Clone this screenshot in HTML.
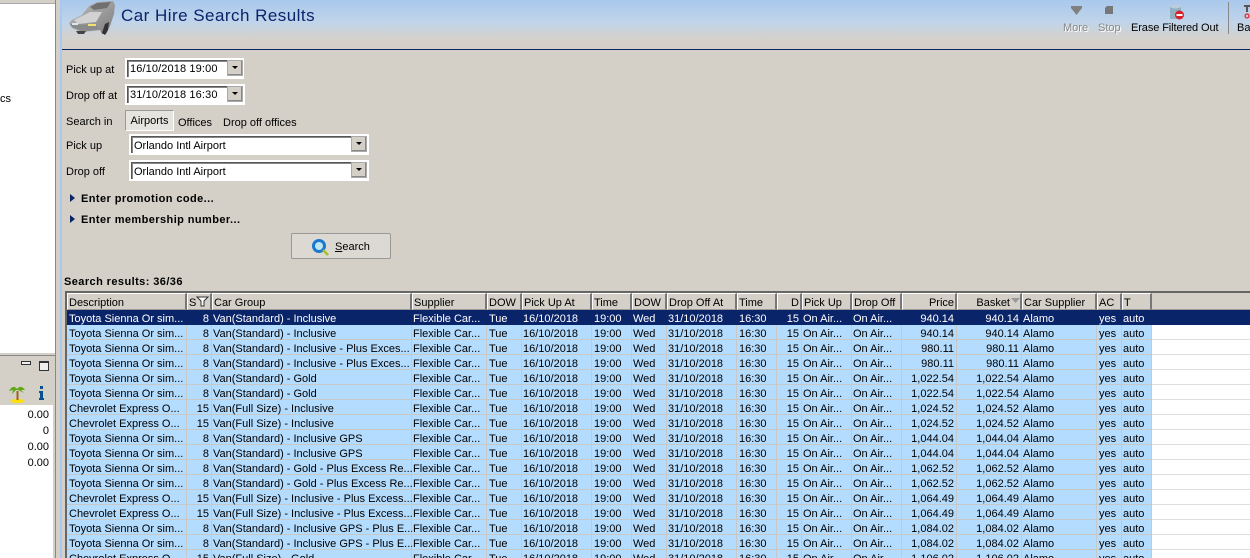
<!DOCTYPE html>
<html><head><meta charset="utf-8"><style>
html,body{margin:0;padding:0;width:1250px;height:558px;overflow:hidden;background:#d4d0c8;font-family:"Liberation Sans",sans-serif;font-size:11px;color:#000}
#w{position:absolute;left:0;top:0;width:1250px;height:558px;overflow:hidden}
.a{position:absolute;white-space:nowrap}
.box{position:absolute;background:#fff;border:1px solid #fff;box-shadow:inset 1px 1px 0 #555,inset 2px 2px 0 #888;box-sizing:border-box;outline:1px solid #fff;line-height:20px;padding-left:3px}
.dd{position:absolute;width:16px;height:16px;background:#d4d0c8;border:1px solid #aaa;box-shadow:inset -1px -1px 0 #888;box-sizing:border-box}
.dd:after{content:"";position:absolute;left:4px;top:5px;border:3px solid transparent;border-top:3px solid #000;border-bottom:0}
.tri{position:absolute;border:4px solid transparent;border-left:5px solid #0a246a;border-right:0}
table{position:absolute;left:67px;top:293px;border-collapse:separate;border-spacing:0;table-layout:fixed;width:1085px;font-size:11px}
td{height:15px;box-sizing:border-box;padding:3px 0 0 1px;box-shadow:inset -1px -1px 0 #c8c8c8;background:#b4dcff;white-space:nowrap;overflow:hidden;line-height:12px}
td:nth-child(1),td:nth-child(5),td:nth-child(7),td:nth-child(10),td:nth-child(17){padding-left:2px}
tr.h td{height:17px;background:#d4d0c8;border-top:1px solid #fff;border-left:1px solid #fff;border-right:2px solid #777;border-bottom:1px solid #999;padding:3px 0 0 1px;box-shadow:none}
tr.s td{background:#0a246a;color:#fff;box-shadow:none}
td.r{text-align:right;padding-right:3px;padding-left:0}
tr.h td.r{padding-right:1px;padding-left:0}
.b{font-weight:bold;letter-spacing:.42px}
</style></head><body><div id="w">
<!-- left panel -->
<div class="a" style="left:0;top:0;width:55px;height:353px;background:#fff;border-right:1px solid #888"></div>
<div class="a" style="left:0;top:0;width:55px;height:3px;background:#d4d0c8;border-bottom:1px solid #aaa"></div>
<div class="a" style="left:0;top:92px;line-height:14px">cs</div>
<div class="a" style="left:0;top:353px;width:55px;height:205px;background:#d4d0c8;border-right:1px solid #888"></div>
<div class="a" style="left:0;top:355px;width:55px;height:1px;background:#888"></div>
<div class="a" style="left:21px;top:361px;width:8px;height:2px;border:1px solid #333;background:#eee"></div>
<div class="a" style="left:39px;top:361px;width:8px;height:7px;border:1px solid #333;border-top-width:2px;background:#eee"></div>
<div class="a" style="left:0;top:405px;width:53px;height:153px;background:#fff"></div>
<svg class="a" style="left:8px;top:384px" width="20" height="20"><ellipse cx="9.500" cy="17" rx="7" ry="2" fill="#ffe000"/><rect x="8.500" y="7" width="2" height="9" fill="#a06020"/><path d="M1 7Q5 0 9 5Q13 0 17 6L13 6L16 9L10 6L8 6L4 10L5 6Z" fill="#60a818"/></svg>
<svg class="a" style="left:38px;top:386px" width="7" height="15"><rect x="2" y="0" width="3" height="3" fill="#0a5090"/><path d="M1 5H5V12H6V14H1V12H2V7H1Z" fill="#0a5090"/></svg>
<div class="a" style="left:0;width:49px;text-align:right;top:408px;line-height:14px">0.00</div>
<div class="a" style="left:0;width:49px;text-align:right;top:424px;line-height:14px">0</div>
<div class="a" style="left:0;width:49px;text-align:right;top:440px;line-height:14px">0.00</div>
<div class="a" style="left:0;width:49px;text-align:right;top:456px;line-height:14px">0.00</div>
<!-- splitter -->
<div class="a" style="left:56px;top:0;width:4px;height:558px;background:#d4d0c8"></div>
<div class="a" style="left:60px;top:0;width:2px;height:558px;background:#a8c8f0"></div>
<!-- header -->
<div class="a" style="left:62px;top:0;width:1188px;height:50px;background:linear-gradient(#a9c8ec 0,#c0d4ea 22px,#d4d2cc 38px,#d4d0c8 49px);border-bottom:1px solid #0a246a;box-sizing:border-box"></div>
<svg class="a" style="left:66px;top:0" width="52" height="36" viewBox="0 0 52 36">
<defs><linearGradient id="g" x1="0" y1="0" x2="1" y2="1"><stop offset="0" stop-color="#bdbdbd"/><stop offset="1" stop-color="#7d7d7d"/></linearGradient></defs>
<path d="M3 23L6 20L16 15L23 6L31 2L47 1L49 5L48 14L44 26L40 34L36 34L34 30L16 32L6 28Z" fill="url(#g)"/>
<path d="M24 7L31 3L45 2L41 8L28 10Z" fill="#707070"/>
<path d="M8 20L24 12L36 12L30 22L12 24Z" fill="#d2d2d2"/>
<path d="M4 24L31 25L33 29L16 31L6 27Z" fill="#8a8a8a"/>
<rect x="22" y="24" width="8" height="2" fill="#f2e070"/>
<rect x="6" y="23" width="6" height="2" fill="#d8e8f0"/>
<path d="M36 33L39 24L43 22L42 30L39 35Z" fill="#333"/>
<path d="M10 31L20 31L18 34L12 34Z" fill="#444"/>
</svg>
<div class="a" style="left:121px;top:6px;font-size:17px;line-height:20px;color:#0a246a;letter-spacing:.47px">Car Hire Search Results</div>
<svg class="a" style="left:1070px;top:5px" width="13" height="11"><path d="M1 1H12V3L6.500 10L1 3Z" fill="#808080"/></svg>
<svg class="a" style="left:1105px;top:6px" width="8" height="8"><path d="M2 0H8V8H0V2Z" fill="#777"/></svg>
<svg class="a" style="left:1169px;top:4px" width="16" height="17"><path d="M1 2H12V15H1Z" fill="#8fb0c0"/><ellipse cx="6.500" cy="2.500" rx="5.500" ry="2" fill="#bcd"/><circle cx="10.500" cy="11" r="4.500" fill="#d8202c"/><rect x="7.500" y="10" width="6" height="2" fill="#fff"/></svg>
<div class="a" style="left:1063px;top:21px;line-height:14px;color:#888;text-shadow:1px 1px 0 #fff">More</div>
<div class="a" style="left:1098px;top:21px;line-height:14px;color:#888;text-shadow:1px 1px 0 #fff">Stop</div>
<div class="a" style="left:1131px;top:21px;line-height:14px;letter-spacing:-.1px">Erase Filtered Out</div>
<div class="a" style="left:1228px;top:2px;width:1px;height:32px;background:#888"></div>
<div class="a" style="left:1237px;top:21px;line-height:14px">Ba</div>
<svg class="a" style="left:1244px;top:5px" width="6" height="14"><path d="M0 0H6V2H4V7H2V2H0Z" fill="#555"/><circle cx="3" cy="11" r="2" fill="none" stroke="#e00"/></svg>
<!-- form -->
<div class="a" style="left:66px;top:63px;line-height:14px">Pick up at</div>
<div class="box" style="left:126px;top:59px;width:117px;height:19px;line-height:17px;padding-top:1px;letter-spacing:.12px">16/10/2018 19:00</div><div class="dd" style="left:227px;top:60px"></div>
<div class="a" style="left:66px;top:89px;line-height:14px">Drop off at</div>
<div class="box" style="left:126px;top:85px;width:118px;height:19px;line-height:17px;padding-top:1px;letter-spacing:.12px">31/10/2018 16:30</div><div class="dd" style="left:227px;top:86px"></div>
<div class="a" style="left:66px;top:115px;line-height:14px">Search in</div>
<div class="a" style="left:125px;top:110px;width:49px;height:21px;background:#e6e4de;border:1px solid #999;border-right-color:#fff;border-bottom-color:#fff;box-sizing:border-box;text-align:center;line-height:21px">Airports</div>
<div class="a" style="left:178px;top:116px;line-height:14px">Offices</div>
<div class="a" style="left:223px;top:116px;line-height:14px">Drop off offices</div>
<div class="a" style="left:66px;top:139px;line-height:14px">Pick up</div>
<div class="box" style="left:130px;top:135px;width:238px;height:19px;line-height:20px">Orlando Intl Airport</div><div class="dd" style="left:351px;top:136px"></div>
<div class="a" style="left:66px;top:165px;line-height:14px">Drop off</div>
<div class="box" style="left:130px;top:161px;width:238px;height:19px;line-height:20px">Orlando Intl Airport</div><div class="dd" style="left:351px;top:162px"></div>
<div class="tri" style="left:70px;top:194px"></div>
<div class="a b" style="left:81px;top:192px;line-height:14px">Enter promotion code...</div>
<div class="tri" style="left:70px;top:215px"></div>
<div class="a b" style="left:81px;top:213px;line-height:14px">Enter membership number...</div>
<div class="a" style="left:291px;top:233px;width:100px;height:26px;background:#dcd8d2;border:1px solid #999;border-radius:2px;box-sizing:border-box"></div>
<svg class="a" style="left:311px;top:238px" width="18" height="18"><circle cx="8" cy="8" r="7" fill="#1a78d0"/><circle cx="8" cy="8" r="4" fill="#bfe6f0"/><path d="M12 12L17 17" stroke="#a8c020" stroke-width="2.500"/></svg>
<div class="a" style="left:335px;top:240px;line-height:14px"><u>S</u>earch</div>
<div class="a b" style="left:64px;top:275px;line-height:14px">Search results: 36/36</div>
<!-- grid -->
<div class="a" style="left:65px;top:291px;width:1185px;height:267px;background:#fff;border-top:2px solid #666;border-left:2px solid #666;box-sizing:border-box"></div>
<div class="a" style="left:1152px;top:293px;width:98px;height:17px;background:#d4d0c8;border-bottom:1px solid #999;box-sizing:border-box"></div>
<div class="a" style="left:1152px;top:325px;width:98px;height:233px;background:repeating-linear-gradient(#fff 0,#fff 14px,#ddd 14px,#ddd 15px)"></div>
<div class="a" style="left:1152px;top:310px;width:98px;height:15px;background:#0a246a"></div>
<table><colgroup><col style="width:120px"><col style="width:25px"><col style="width:200px"><col style="width:75px"><col style="width:35px"><col style="width:70px"><col style="width:40px"><col style="width:35px"><col style="width:70px"><col style="width:40px"><col style="width:25px"><col style="width:50px"><col style="width:50px"><col style="width:55px"><col style="width:65px"><col style="width:75px"><col style="width:25px"><col style="width:30px"></colgroup>
<tr class="h"><td>Description</td><td>S</td><td>Car Group</td><td>Supplier</td><td>DOW</td><td>Pick Up At</td><td>Time</td><td>DOW</td><td>Drop Off At</td><td>Time</td><td class="r">D</td><td>Pick Up</td><td>Drop Off</td><td class="r">Price</td><td class="r" style="padding-right:10px">Basket</td><td>Car Supplier</td><td>AC</td><td>T</td></tr>
<tr class="s"><td>Toyota Sienna Or sim...</td><td class="r">8</td><td>Van(Standard) - Inclusive</td><td>Flexible Car...</td><td>Tue</td><td>16/10/2018</td><td>19:00</td><td>Wed</td><td>31/10/2018</td><td>16:30</td><td class="r">15</td><td>On Air...</td><td>On Air...</td><td class="r">940.14</td><td class="r">940.14</td><td>Alamo</td><td>yes</td><td>auto</td></tr>
<tr><td>Toyota Sienna Or sim...</td><td class="r">8</td><td>Van(Standard) - Inclusive</td><td>Flexible Car...</td><td>Tue</td><td>16/10/2018</td><td>19:00</td><td>Wed</td><td>31/10/2018</td><td>16:30</td><td class="r">15</td><td>On Air...</td><td>On Air...</td><td class="r">940.14</td><td class="r">940.14</td><td>Alamo</td><td>yes</td><td>auto</td></tr>
<tr><td>Toyota Sienna Or sim...</td><td class="r">8</td><td>Van(Standard) - Inclusive - Plus Exces...</td><td>Flexible Car...</td><td>Tue</td><td>16/10/2018</td><td>19:00</td><td>Wed</td><td>31/10/2018</td><td>16:30</td><td class="r">15</td><td>On Air...</td><td>On Air...</td><td class="r">980.11</td><td class="r">980.11</td><td>Alamo</td><td>yes</td><td>auto</td></tr>
<tr><td>Toyota Sienna Or sim...</td><td class="r">8</td><td>Van(Standard) - Inclusive - Plus Exces...</td><td>Flexible Car...</td><td>Tue</td><td>16/10/2018</td><td>19:00</td><td>Wed</td><td>31/10/2018</td><td>16:30</td><td class="r">15</td><td>On Air...</td><td>On Air...</td><td class="r">980.11</td><td class="r">980.11</td><td>Alamo</td><td>yes</td><td>auto</td></tr>
<tr><td>Toyota Sienna Or sim...</td><td class="r">8</td><td>Van(Standard) - Gold</td><td>Flexible Car...</td><td>Tue</td><td>16/10/2018</td><td>19:00</td><td>Wed</td><td>31/10/2018</td><td>16:30</td><td class="r">15</td><td>On Air...</td><td>On Air...</td><td class="r">1,022.54</td><td class="r">1,022.54</td><td>Alamo</td><td>yes</td><td>auto</td></tr>
<tr><td>Toyota Sienna Or sim...</td><td class="r">8</td><td>Van(Standard) - Gold</td><td>Flexible Car...</td><td>Tue</td><td>16/10/2018</td><td>19:00</td><td>Wed</td><td>31/10/2018</td><td>16:30</td><td class="r">15</td><td>On Air...</td><td>On Air...</td><td class="r">1,022.54</td><td class="r">1,022.54</td><td>Alamo</td><td>yes</td><td>auto</td></tr>
<tr><td>Chevrolet Express O...</td><td class="r">15</td><td>Van(Full Size) - Inclusive</td><td>Flexible Car...</td><td>Tue</td><td>16/10/2018</td><td>19:00</td><td>Wed</td><td>31/10/2018</td><td>16:30</td><td class="r">15</td><td>On Air...</td><td>On Air...</td><td class="r">1,024.52</td><td class="r">1,024.52</td><td>Alamo</td><td>yes</td><td>auto</td></tr>
<tr><td>Chevrolet Express O...</td><td class="r">15</td><td>Van(Full Size) - Inclusive</td><td>Flexible Car...</td><td>Tue</td><td>16/10/2018</td><td>19:00</td><td>Wed</td><td>31/10/2018</td><td>16:30</td><td class="r">15</td><td>On Air...</td><td>On Air...</td><td class="r">1,024.52</td><td class="r">1,024.52</td><td>Alamo</td><td>yes</td><td>auto</td></tr>
<tr><td>Toyota Sienna Or sim...</td><td class="r">8</td><td>Van(Standard) - Inclusive GPS</td><td>Flexible Car...</td><td>Tue</td><td>16/10/2018</td><td>19:00</td><td>Wed</td><td>31/10/2018</td><td>16:30</td><td class="r">15</td><td>On Air...</td><td>On Air...</td><td class="r">1,044.04</td><td class="r">1,044.04</td><td>Alamo</td><td>yes</td><td>auto</td></tr>
<tr><td>Toyota Sienna Or sim...</td><td class="r">8</td><td>Van(Standard) - Inclusive GPS</td><td>Flexible Car...</td><td>Tue</td><td>16/10/2018</td><td>19:00</td><td>Wed</td><td>31/10/2018</td><td>16:30</td><td class="r">15</td><td>On Air...</td><td>On Air...</td><td class="r">1,044.04</td><td class="r">1,044.04</td><td>Alamo</td><td>yes</td><td>auto</td></tr>
<tr><td>Toyota Sienna Or sim...</td><td class="r">8</td><td>Van(Standard) - Gold - Plus Excess Re...</td><td>Flexible Car...</td><td>Tue</td><td>16/10/2018</td><td>19:00</td><td>Wed</td><td>31/10/2018</td><td>16:30</td><td class="r">15</td><td>On Air...</td><td>On Air...</td><td class="r">1,062.52</td><td class="r">1,062.52</td><td>Alamo</td><td>yes</td><td>auto</td></tr>
<tr><td>Toyota Sienna Or sim...</td><td class="r">8</td><td>Van(Standard) - Gold - Plus Excess Re...</td><td>Flexible Car...</td><td>Tue</td><td>16/10/2018</td><td>19:00</td><td>Wed</td><td>31/10/2018</td><td>16:30</td><td class="r">15</td><td>On Air...</td><td>On Air...</td><td class="r">1,062.52</td><td class="r">1,062.52</td><td>Alamo</td><td>yes</td><td>auto</td></tr>
<tr><td>Chevrolet Express O...</td><td class="r">15</td><td>Van(Full Size) - Inclusive - Plus Excess...</td><td>Flexible Car...</td><td>Tue</td><td>16/10/2018</td><td>19:00</td><td>Wed</td><td>31/10/2018</td><td>16:30</td><td class="r">15</td><td>On Air...</td><td>On Air...</td><td class="r">1,064.49</td><td class="r">1,064.49</td><td>Alamo</td><td>yes</td><td>auto</td></tr>
<tr><td>Chevrolet Express O...</td><td class="r">15</td><td>Van(Full Size) - Inclusive - Plus Excess...</td><td>Flexible Car...</td><td>Tue</td><td>16/10/2018</td><td>19:00</td><td>Wed</td><td>31/10/2018</td><td>16:30</td><td class="r">15</td><td>On Air...</td><td>On Air...</td><td class="r">1,064.49</td><td class="r">1,064.49</td><td>Alamo</td><td>yes</td><td>auto</td></tr>
<tr><td>Toyota Sienna Or sim...</td><td class="r">8</td><td>Van(Standard) - Inclusive GPS - Plus E...</td><td>Flexible Car...</td><td>Tue</td><td>16/10/2018</td><td>19:00</td><td>Wed</td><td>31/10/2018</td><td>16:30</td><td class="r">15</td><td>On Air...</td><td>On Air...</td><td class="r">1,084.02</td><td class="r">1,084.02</td><td>Alamo</td><td>yes</td><td>auto</td></tr>
<tr><td>Toyota Sienna Or sim...</td><td class="r">8</td><td>Van(Standard) - Inclusive GPS - Plus E...</td><td>Flexible Car...</td><td>Tue</td><td>16/10/2018</td><td>19:00</td><td>Wed</td><td>31/10/2018</td><td>16:30</td><td class="r">15</td><td>On Air...</td><td>On Air...</td><td class="r">1,084.02</td><td class="r">1,084.02</td><td>Alamo</td><td>yes</td><td>auto</td></tr>
<tr><td>Chevrolet Express O...</td><td class="r">15</td><td>Van(Full Size) - Gold</td><td>Flexible Car...</td><td>Tue</td><td>16/10/2018</td><td>19:00</td><td>Wed</td><td>31/10/2018</td><td>16:30</td><td class="r">15</td><td>On Air...</td><td>On Air...</td><td class="r">1,106.02</td><td class="r">1,106.02</td><td>Alamo</td><td>yes</td><td>auto</td></tr>
</table>
<svg class="a" style="left:196px;top:296px" width="13" height="11"><path d="M1 1H12L8 5V10H5V5Z" fill="#fff" stroke="#333"/></svg>
<svg class="a" style="left:1011px;top:298px" width="10" height="6"><path d="M0 0H9L4.500 5Z" fill="#999"/></svg>
</div></body></html>
